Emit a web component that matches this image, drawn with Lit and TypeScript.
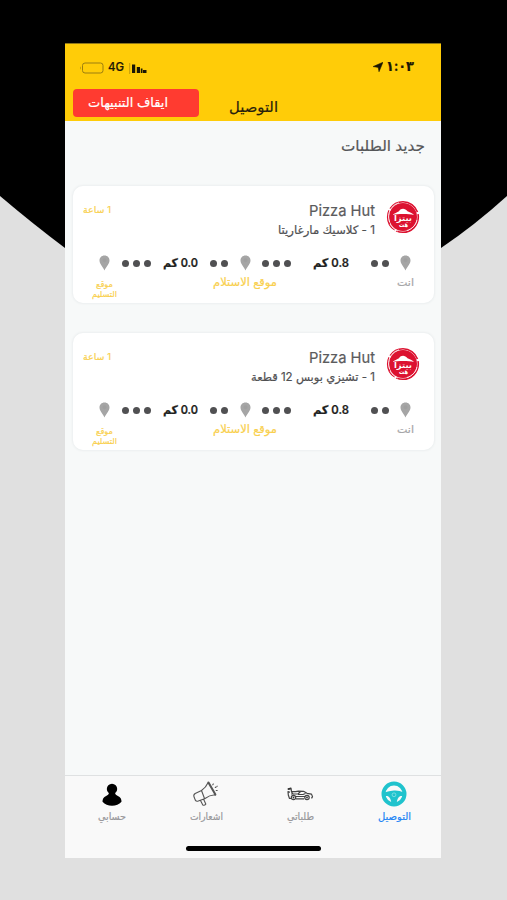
import { LitElement, html, css, svg } from "lit";
import { customElement, property } from "lit/decorators.js";

/** One line of text, drawn to a known width so mixed scripts keep their measure. */
@customElement("fit-text")
class FitText extends LitElement {
  @property() text = "";
  @property({ type: Number }) w = 50;
  @property({ type: Number }) size = 12;
  @property({ type: Number }) weight = 400;
  static styles = css`
    :host { display: block; flex: none; }
    svg { display: block; overflow: visible; }
    text { font-family: Inter, "DejaVu Sans", sans-serif; fill: currentColor; stroke: currentColor;
      stroke-width: .2; text-anchor: middle; }
  `;
  render() {
    const h = Math.round(this.size * 1.5);
    return html`<svg width=${this.w} height=${h}>
      <text x=${this.w / 2} y=${Math.round(h * 0.72)} font-size=${this.size} font-weight=${this.weight}
        textLength=${this.w} lengthAdjust="spacingAndGlyphs">${this.text}</text></svg>`;
  }
}

@customElement("order-card")
class OrderCard extends LitElement {
  @property() item = "";
  @property({ type: Number }) itemWidth = 97;
  static styles = css`
    :host { display: block; box-sizing: border-box; height: 117px; background: #fff; border-radius: 10px;
      box-shadow: 0 0 2px 1px #eceff0; overflow: hidden; direction: rtl; }
    .top { display: flex; height: 68px; padding: 14px 14px 0 10px; box-sizing: border-box; }
    .logo { width: 34px; height: 34px; flex: none; }
    .logo text { font-family: "DejaVu Sans", sans-serif; font-weight: 700; fill: #fff; text-anchor: middle; }
    .names { flex: 1; padding: 0 11px 0 0; color: #505052; display: flex; flex-direction: column; align-items: flex-start; }
    .name { color: #5b5b5d; margin-top: -1px; }
    .age { color: #f9d04e; padding-top: 3px; }
    .track { display: grid; grid-template-columns: 26px 25px 72px 37px 26px 26px 52px 36px 28px;
      grid-template-rows: 18px 30px; padding: 0 16px 0 17px; justify-items: center; }
    .track > * { align-self: center; }
    .dots { display: flex; gap: 4px; }
    .dots i { width: 7px; height: 7px; border-radius: 50%; background: #505052; }
    .pin { width: 11px; height: 16px; display: block; }
    .km { color: #1e1e20; }
    .track > .place { align-self: start; display: flex; flex-direction: column; align-items: center; width: 0; }
    .you { color: #a6a6a8; padding-top: 2px; }
    .pickup { color: #f9d04e; padding-top: 2px; }
    .drop { color: #f9d04e; padding-top: 6px; }
    .second { margin-top: -3px; }
  `;
  dots(n: number) {
    return html`<div class="dots">${Array.from({ length: n }, () => html`<i></i>`)}</div>`;
  }
  pin() {
    return html`<svg class="pin" viewBox="0 0 11 16"><path d="M5.500 .5C2.500 .5.500 2.700.500 5.600c0 3.400 3.200 6 5 10 1.800-4 5-6.600 5-10C10.500 2.700 8.500.5 5.500.5z" fill="#a5a5a5"/><circle cx="5.500" cy="5.200" r="2" fill="#9f9f9f"/></svg>`;
  }
  logo() {
    return html`<svg class="logo" viewBox="0 0 34 34">
      <circle cx="17" cy="17" r="14" fill="#dc1230"/>
      <circle cx="17" cy="17" r="15.300" fill="none" stroke="#dc1230" stroke-width="1.600" stroke-dasharray="31 1.500 22 2 34 2"/>
      <path d="M3.500 22C.5 13 5 5 13 2.800M31 20c-1 5-5 9-10 10.500M4 24c2 4 5 6 8 7" fill="none" stroke="#fff" stroke-width=".8"/>
      <path d="M6.500 15c2-2 4.500-2.500 6.500-3.800 1-1.700 2.500-2.400 4-2.400s3.500.9 4.500 2.400c2 1 5 1.800 6.500 3.800-5-1.200-16.500-1.200-21.500 0z" fill="#fff"/>
      <text x="17" y="20.500" font-size="8" textLength="18" lengthAdjust="spacingAndGlyphs">بيتزا</text>
      <text x="17.500" y="27" font-size="7" textLength="9" lengthAdjust="spacingAndGlyphs">هت</text>
    </svg>`;
  }
  render() {
    return html`
      <div class="top">
        ${this.logo()}
        <div class="names">
          <fit-text class="name" text="Pizza Hut" w="66" size="15"></fit-text>
          <fit-text class="item" .text=${this.item} .w=${this.itemWidth} size="11.5"></fit-text>
        </div>
        <fit-text class="age" text="1 ساعة" w="28" size="9"></fit-text>
      </div>
      <div class="track">
        ${this.pin()} ${this.dots(2)}
        <fit-text class="km" text="0.8 كم" w="36" size="12" weight="600"></fit-text>
        ${this.dots(3)} ${this.pin()} ${this.dots(2)}
        <fit-text class="km" text="0.0 كم" w="35" size="12" weight="600"></fit-text>
        ${this.dots(3)} ${this.pin()}
        <div class="place you"><fit-text text="انت" w="17" size="11"></fit-text></div>
        <span></span><span></span><span></span>
        <div class="place pickup"><fit-text text="موقع الاستلام" w="64" size="11.5"></fit-text></div>
        <span></span><span></span><span></span>
        <div class="place drop">
          <fit-text text="موقع" w="17" size="8.5"></fit-text>
          <fit-text class="second" text="التسليم" w="25" size="8.5"></fit-text>
        </div>
      </div>`;
  }
}

const icons = {
  wheel: svg`<circle cx="14" cy="14" r="10.500" fill="none" stroke="#20c3cd" stroke-width="4"/>
    <path d="M4 12.500Q9 10.800 14 10.500T24 12.500V16h-3.500q-3.500 1-4 8.500h-5q-.5-7.500-4-8.500H4z" fill="#20c3cd"/>
    <circle cx="14" cy="14.800" r="1.900" fill="none" stroke="#9be5e8" stroke-width=".7"/>`,
  car: svg`<g fill="none" stroke="#444" stroke-width="1.200" stroke-linejoin="round">
    <path d="M5 18.500H3.500L2.300 15l-.3-3.500 2 .8M2.200 8.800l2.800-.6.500 3.500h4l3-.6 5 .2 3.500 2 4.500.8 1 2.500-1 1.800M10 18.800h8M5 14h7l2.500-2.500M12 14.500h5l2.500-1M10 16.500h9M5.500 12l2 2.500"/>
    <circle cx="7.500" cy="17.500" r="2.200"/><circle cx="21" cy="17.500" r="2.200"/></g>
    <path d="M1.500 8.500l3-.8.4 1.800-3 .5z" fill="#333"/><circle cx="7.500" cy="17.500" r=".9" fill="#333"/><circle cx="21" cy="17.500" r=".9" fill="#333"/>`,
  horn: svg`<g fill="none" stroke="#555" stroke-width="1.100" stroke-linejoin="round" stroke-linecap="round">
    <path d="M9.500 10.500L3.200 13.500q-2 1.300-1.200 3.300l1.300 3.300q1 1.700 3 1l6.300-2.400zM9.500 10.500Q14 7.500 16 2.800L23 14.800q-5.500.3-10.400 3.900M8.500 20.500l2.300 4.500q1.700.8 3-.9l-2.200-4.800M15.800 3q-.1-1.400 1.100-.8l6.900 12q.2 1.200-1 1"/>
    <path d="M20.800 4.800l.8-1.500M23.300 7.500l1.900-1.300M24.200 10.500h1.700" stroke-dasharray="1 1.300"/></g>`,
  user: svg`<circle cx="14" cy="8.900" r="5.200"/><path d="M11 13h6q.3 2 2.900 3 3.800 1.700 3.600 5.800-3.600 4-9.500 4t-9.500-4Q4.300 17.700 8.100 16q2.600-1 2.900-3z"/>`,
};

@customElement("app-root")
class AppRoot extends LitElement {
  static styles = css`
    :host { display: block; position: relative; width: 507px; height: 900px; box-sizing: border-box;
      padding: 43px 66px 0 65px; background: #e0e0e0; overflow: hidden; }
    .backdrop { position: absolute; left: 0; top: 0; width: 507px; height: 260px; }
    .phone { position: relative; display: flex; flex-direction: column; height: 815px; background: #f7f9f9; direction: rtl; }
    .header { height: 78px; background: #ffcc08; display: flex; flex-direction: column; box-sizing: border-box;
      border-top: 1px solid #8e7619; }
    .status { display: flex; justify-content: space-between; align-items: center; height: 45px; padding: 2px 27px 0 14px;
      box-sizing: border-box; }
    .clock, .signal { display: flex; align-items: center; direction: ltr; color: #1b1605; }
    .clock { gap: 3px; }
    .battery { width: 25px; height: 12px; margin-right: 4px; }
    .bars { width: 18px; height: 11px; margin-left: 5px; margin-top: 2px; }
    .arrow { width: 10px; height: 10px; margin-top: -2px; }
    .clock fit-text { margin-top: -2px; }
    .nav { display: flex; direction: ltr; padding-left: 8px; align-items: flex-start; }
    .mute { width: 126px; height: 28px; border-radius: 4px; background: #ff3b30; color: #fff; display: flex;
      padding: 4px 0 0 15px; box-sizing: border-box; }
    .title { color: #27210c; padding: 7px 0 0 30px; }
    .heading { color: #555658; padding: 13px 16px 0 0; height: 65px; box-sizing: border-box; display: flex; }
    .list { flex: 1; display: flex; flex-direction: column; gap: 30px; padding: 0 7px 0 8px; }
    .tabs { height: 83px; box-sizing: border-box; border-top: 1px solid #dfe1e2; background: #f9f9f9;
      display: flex; flex-direction: column; align-items: center; justify-content: space-between; }
    .row { display: grid; grid-template-columns: repeat(4, 94px); }
    .tab { display: flex; flex-direction: column; align-items: center; padding-top: 4px; color: #98989b; }
    .tab svg { width: 28px; height: 28px; display: block; }
    .tab fit-text { margin-top: 1px; }
    .active { color: #2185f5; }
    .home { width: 135px; height: 5px; border-radius: 3px; background: #000; margin-bottom: 7px; }
  `;
  tab(icon: unknown, label: string, w: number, active = false) {
    return html`<div class="tab ${active ? "active" : ""}"><svg viewBox="0 0 28 28">${icon}</svg>
      <fit-text .text=${label} .w=${w} size="10"></fit-text></div>`;
  }
  render() {
    return html`
      <svg class="backdrop" viewBox="0 0 507 260"><path d="M0 0H507V196Q475 225 441 248L253 260 65 248Q33 224 0 196z"/></svg>
      <div class="phone">
        <div class="header">
          <div class="status">
            <div class="clock">
              <svg class="arrow" viewBox="0 0 10 10"><path d="M10 .2L6 9.800 5.200 5.400 0 4.600z" fill="#1b1605" stroke="#1b1605" stroke-width=".5"/></svg>
              <fit-text text="١:٠٣" w="28" size="14" weight="700"></fit-text>
            </div>
            <div class="signal">
              <svg class="battery" viewBox="0 0 25 12"><rect x="3.500" y="1" width="20.500" height="10" rx="2.500" fill="none" stroke="#9b7e10" stroke-width="1"/><path d="M2 4.200Q.6 6 2 7.800z" fill="#9b7e10"/></svg>
              <fit-text text="4G" w="16" size="11.5" weight="500"></fit-text>
              <svg class="bars" viewBox="0 0 18 11"><path d="M.7 0v11" stroke="#c39a0c" stroke-width="1"/><path d="M3 1.500h3.200V10H3zM7.800 4H11v6H7.800zM11.800 5.500h1.700V10h-1.700zM14 7h3.500v3H14z" fill="#1b1605"/></svg>
            </div>
          </div>
          <div class="nav">
            <div class="mute"><fit-text text="ايقاف التنبيهات" w="80" size="13"></fit-text></div>
            <div class="title"><fit-text text="التوصيل" w="49" size="14.5"></fit-text></div>
          </div>
        </div>
        <div class="heading"><fit-text text="جديد الطلبات" w="84" size="15"></fit-text></div>
        <div class="list">
          <order-card item="1 - كلاسيك مارغاريتا" .itemWidth=${97}></order-card>
          <order-card item="1 - تشيزي بوبس 12 قطعة" .itemWidth=${124}></order-card>
        </div>
        <div class="tabs">
          <div class="row">
            ${this.tab(icons.wheel, "التوصيل", 33, true)}
            ${this.tab(icons.car, "طلباتي", 27)}
            ${this.tab(icons.horn, "اشعارات", 33)}
            ${this.tab(icons.user, "حسابي", 28)}
          </div>
          <div class="home"></div>
        </div>
      </div>`;
  }
}
